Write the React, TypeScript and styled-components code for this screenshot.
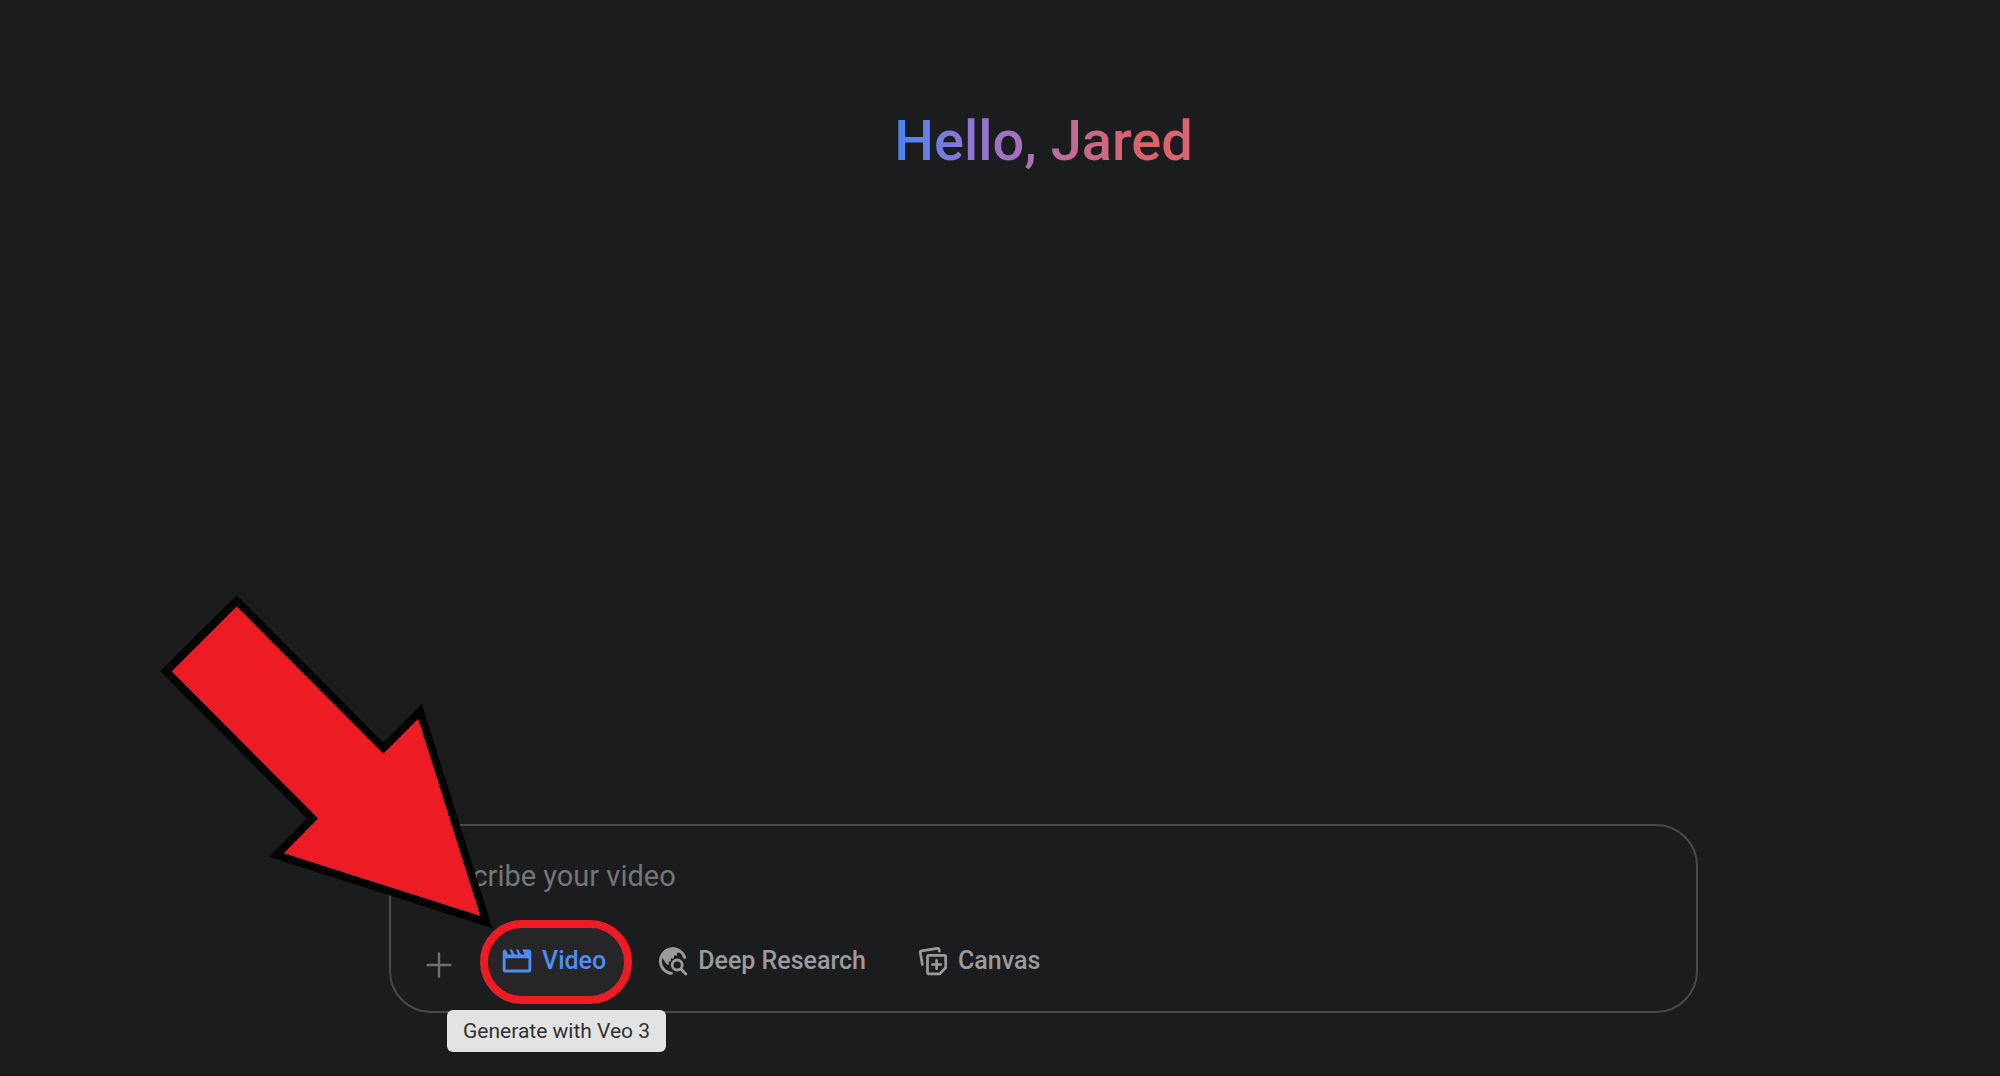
import React from 'react';
import styled, { createGlobalStyle } from 'styled-components';

const GlobalStyle = createGlobalStyle`
  *, *::before, *::after { box-sizing: border-box; }
  body {
    margin: 0;
    background: #1b1c1d;
    font-family: Roboto, "Noto Sans", "Liberation Sans", sans-serif;
  }
`;

const Page = styled.main`
  display: flex;
  flex-direction: column;
  align-items: center;
  min-height: 100vh;
  padding: 105px 0 61px 87px;
  border-bottom: 2px solid #1a1317;
  overflow: hidden;
`;

const Greeting = styled.h1`
  margin: 0;
  font-size: 56px;
  line-height: 72px;
  font-weight: 500;
  color: transparent;
  background: linear-gradient(90deg, #4b85f3 0%, #9474d0 28%, #a671bd 42%, #c46b92 60%, #dc6168 84%, #d96570 100%);
  background-clip: text;
  -webkit-background-clip: text;
`;

const Composer = styled.form`
  display: flex;
  flex-direction: column;
  gap: 32px;
  width: calc(100% - 604px);
  min-width: 760px;
  margin-top: auto;
  padding: 30px 32px 15px;
  border: 2px solid #48494a;
  border-radius: 42px;
`;

const Prompt = styled.input`
  width: 100%;
  height: 40px;
  padding: 0;
  border: 0;
  outline: 0;
  background: transparent;
  color: #e3e3e3;
  font: 400 29px/40px Roboto, "Liberation Sans", sans-serif;
  &::placeholder { color: #757677; opacity: 1; }
`;

const Toolbar = styled.div`
  display: flex;
  align-items: center;
  gap: 33px;
`;

const ToolList = styled.div`
  display: flex;
  gap: 20px;
`;

const AddButton = styled.button`
  display: flex;
  justify-content: center;
  width: 32px;
  padding: 6px 0 0;
  border: 0;
  background: none;
  color: #6f7071;
`;

const ToolSlot = styled.div`
  position: relative;
`;

const Tool = styled.button<{ $active?: boolean }>`
  display: flex;
  align-items: center;
  gap: 10px;
  height: 68px;
  padding: 0 18px 2px 14px;
  border: 0;
  border-radius: 34px;
  background: ${(p) => (p.$active ? '#262628' : 'transparent')};
  color: ${(p) => (p.$active ? '#4f8df5' : '#9a9b9c')};
  font: 500 25px/32px Roboto, "Liberation Sans", sans-serif;
  white-space: nowrap;
`;

const Ring = styled.span`
  position: absolute;
  inset: -8px;
  border: 8px solid #ed1c24;
  border-radius: 42px;
  pointer-events: none;
`;

const Tooltip = styled.span`
  position: absolute;
  top: 82px;
  left: -41px;
  padding: 5px 16px;
  border-radius: 6px;
  background: #e3e3e3;
  color: #303132;
  font-size: 21px;
  line-height: 32px;
  white-space: nowrap;
`;

const Pointer = styled.svg`
  position: absolute;
  right: 100%;
  bottom: 100%;
  width: 340px;
  height: 340px;
  margin-right: -7px;
  overflow: visible;
  pointer-events: none;
`;

const PlusIcon = () => (
  <svg width="26" height="26" viewBox="0 0 26 26" fill="none" stroke="currentColor" strokeWidth="2.4" strokeLinecap="round" aria-hidden="true">
    <path d="M13 1.500v23M1.500 13h23" />
  </svg>
);

const VideoIcon = () => (
  <svg width="30" height="30" viewBox="1.500 1.500 21 21" fill="currentColor" aria-hidden="true">
    <path fillRule="evenodd" d="M4 4 5.500 7q.3.500.9.500H8q.4 0 .2-.4L6.700 4H8.500L10 7q.3.500.9.500h1.600q.4 0 .2-.4L11.200 4H13l1.500 3q.3.500.9.500H17q.4 0 .2-.4L15.700 4H20.200A1.800 1.800 0 0 1 22 5.800V18.200A1.800 1.800 0 0 1 20.200 20H3.800A1.800 1.800 0 0 1 2 18.200V5.800Q2 4 4 4ZM4 10v8h16v-8Z" />
  </svg>
);

const ResearchIcon = () => (
  <svg width="30" height="30" viewBox="0 0 30 30" fill="none" stroke="currentColor" strokeLinecap="round" aria-hidden="true">
    <path strokeWidth="2.800" d="M13.500 27.400A12.400 12.400 0 1 1 26.700 11.600" />
    <path fill="currentColor" stroke="none" d="M3 10C5 4.500 10 1.500 15 1.600c2.500 0 5 .8 7 2.300v2.800h-3v2.800h-3v3h-3.200v3h-2v3.200H9z" />
    <circle cx="19.200" cy="19" r="5" strokeWidth="2.800" />
    <path strokeWidth="2.800" d="m23 23 4.800 5" />
  </svg>
);

const CanvasIcon = () => (
  <svg width="30" height="30" viewBox="0 0 30 30" fill="none" stroke="currentColor" strokeWidth="2.700" strokeLinecap="round" strokeLinejoin="round" aria-hidden="true">
    <path d="M4.400 18.500 2.300 6.600a1.500 1.500 0 0 1 1.200-1.700L19.400 2.300a1.500 1.500 0 0 1 1.700 1.200l.3 1.700" />
    <path d="M11 9.300h15.200a1.500 1.500 0 0 1 1.500 1.500v11l-6 6H11a1.500 1.500 0 0 1-1.500-1.500V10.800A1.500 1.500 0 0 1 11 9.300z" />
    <path d="M18.600 14.300v8.400M14.400 18.500h8.400" />
  </svg>
);

export default function App() {
  return (
    <>
      <GlobalStyle />
      <Page>
        <Greeting>Hello, Jared</Greeting>
        <Composer onSubmit={(e) => e.preventDefault()}>
          <Prompt type="text" aria-label="Describe your video" placeholder="Describe your video" />
          <Toolbar>
            <AddButton type="button" aria-label="Add files"><PlusIcon /></AddButton>
            <ToolList>
              <ToolSlot>
                <Tool type="button" $active aria-describedby="video-tip"><VideoIcon />Video</Tool>
                <Ring />
                <Tooltip id="video-tip" role="tooltip">Generate with Veo 3</Tooltip>
                <Pointer viewBox="155 588 340 340" aria-hidden="true">
                  <path d="M236.700 601 383.300 748 420 711.500 486.300 922 276.500 855 312.500 818.500 166 671.300z" fill="#ed1c24" stroke="#000" strokeWidth="8" strokeMiterlimit="10" />
                </Pointer>
              </ToolSlot>
              <Tool type="button"><ResearchIcon />Deep Research</Tool>
              <Tool type="button"><CanvasIcon />Canvas</Tool>
            </ToolList>
          </Toolbar>
        </Composer>
      </Page>
    </>
  );
}
